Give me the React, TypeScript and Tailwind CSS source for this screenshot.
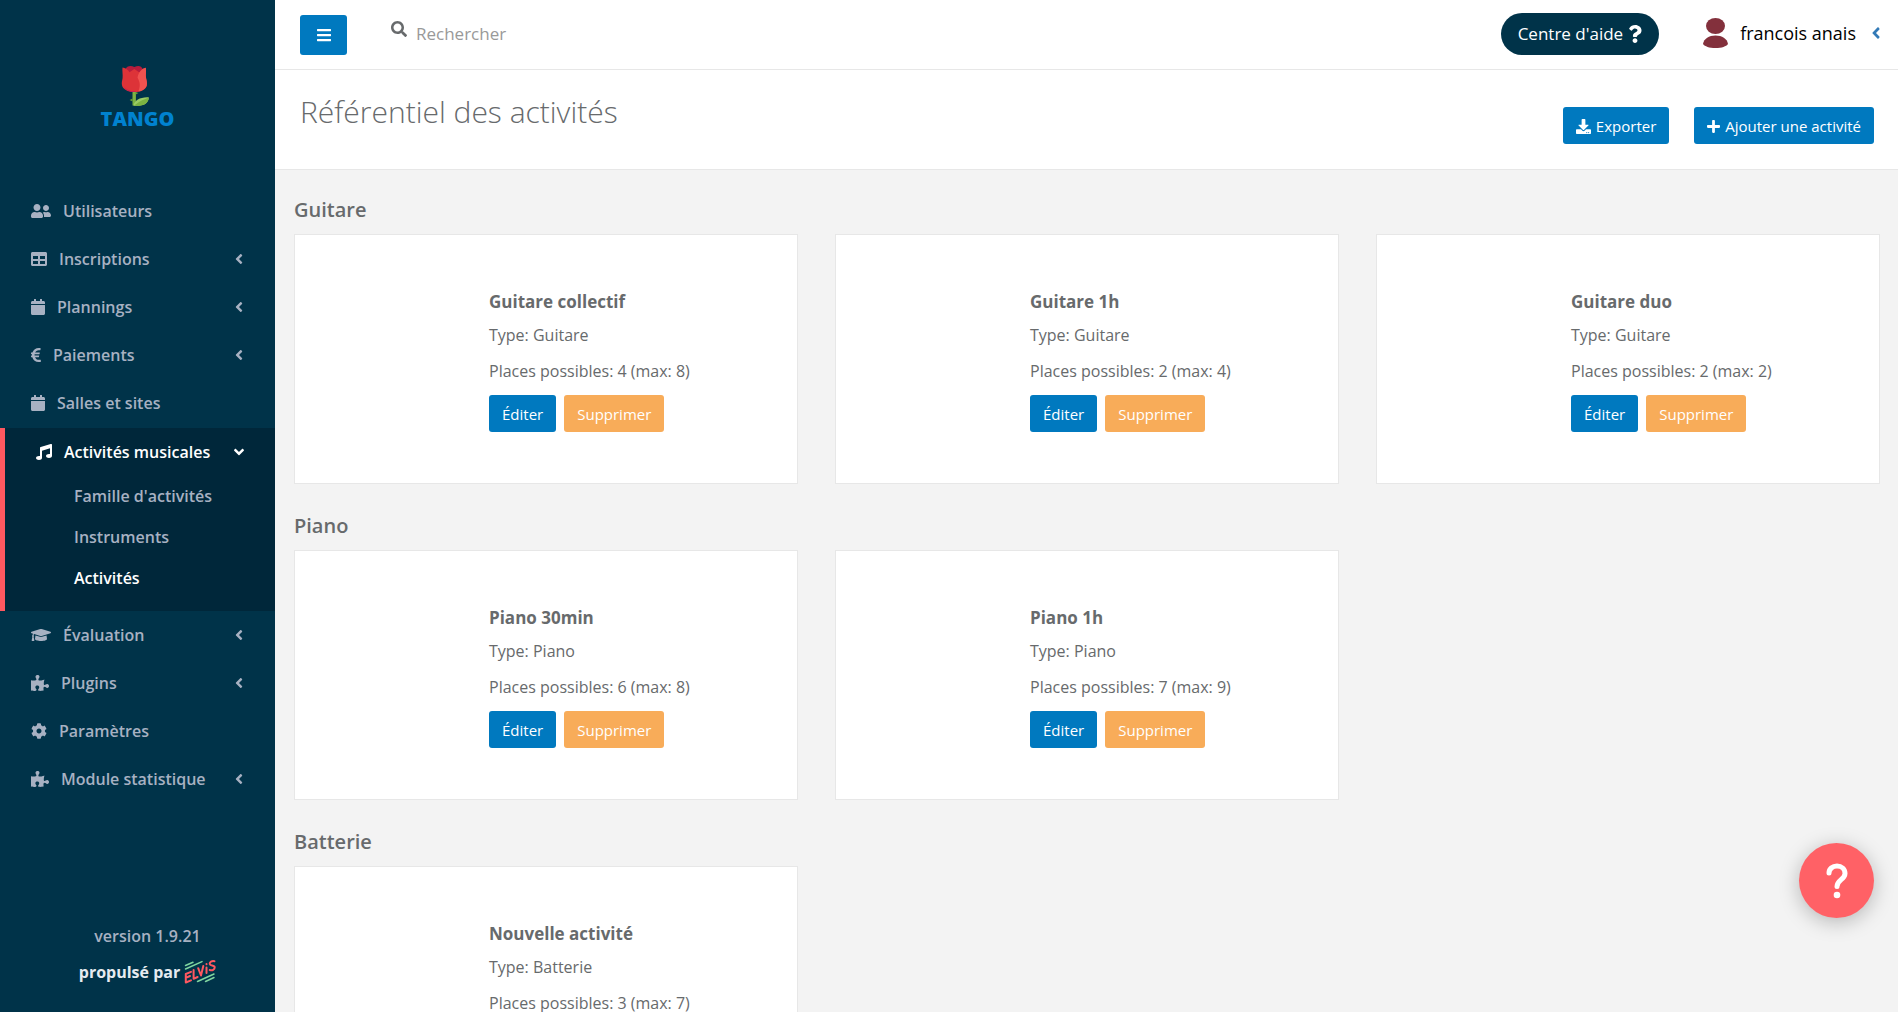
import { useState } from "react";
import type { IconType } from "react-icons";
import {
  FaAngleDown,
  FaAngleLeft,
  FaBars,
  FaCalendar,
  FaCog,
  FaDownload,
  FaEuroSign,
  FaGraduationCap,
  FaMusic,
  FaPlus,
  FaPuzzlePiece,
  FaQuestion,
  FaSearch,
  FaTable,
  FaUserFriends,
} from "react-icons/fa";

type MenuEntry = {
  label: string;
  icon: IconType;
  iconClass: string;
  expandable?: boolean;
  children?: string[];
};

type Activity = { name: string; type: string; places: number; max: number };

const menu: MenuEntry[] = [
  { label: "Utilisateurs", icon: FaUserFriends, iconClass: "mr-3 h-4 w-5" },
  { label: "Inscriptions", icon: FaTable, iconClass: "mr-3 h-4 w-4", expandable: true },
  { label: "Plannings", icon: FaCalendar, iconClass: "mr-3 h-4 w-[14px]", expandable: true },
  { label: "Paiements", icon: FaEuroSign, iconClass: "mr-3 h-4 w-[10px]", expandable: true },
  { label: "Salles et sites", icon: FaCalendar, iconClass: "mr-3 h-4 w-[14px]" },
  {
    label: "Activités musicales",
    icon: FaMusic,
    iconClass: "mr-3 h-4 w-4",
    expandable: true,
    children: ["Famille d'activités", "Instruments", "Activités"],
  },
  { label: "Évaluation", icon: FaGraduationCap, iconClass: "mr-3 h-4 w-5", expandable: true },
  { label: "Plugins", icon: FaPuzzlePiece, iconClass: "mr-3 h-4 w-[18px]", expandable: true },
  { label: "Paramètres", icon: FaCog, iconClass: "mr-3 h-4 w-4" },
  {
    label: "Module statistique",
    icon: FaPuzzlePiece,
    iconClass: "mr-3 h-4 w-[18px]",
    expandable: true,
  },
];

const families: { title: string; activities: Activity[] }[] = [
  {
    title: "Guitare",
    activities: [
      { name: "Guitare collectif", type: "Guitare", places: 4, max: 8 },
      { name: "Guitare 1h", type: "Guitare", places: 2, max: 4 },
      { name: "Guitare duo", type: "Guitare", places: 2, max: 2 },
    ],
  },
  {
    title: "Piano",
    activities: [
      { name: "Piano 30min", type: "Piano", places: 6, max: 8 },
      { name: "Piano 1h", type: "Piano", places: 7, max: 9 },
    ],
  },
  {
    title: "Batterie",
    activities: [{ name: "Nouvelle activité", type: "Batterie", places: 3, max: 7 }],
  },
];

function RoseLogo() {
  return (
    <svg viewBox="0 0 30 42" className="mr-[5px] h-[42px] w-[30px]" aria-hidden="true">
      <path d="M12.500 25h3.400v15.500h-3.400z" fill="#7cb342" />
      <path d="M12.600 33.500 9.600 35l3 1.400zM15.800 27l2.600 1-2.600 1.600z" fill="#689f38" />
      <path d="M13.500 40.700c1-5.200 7-8.900 15.300-8.300-.4 6-5.400 9.100-15.300 8.300z" fill="#9ccc65" />
      <path d="M14 40.700c4-3.400 8-5.700 14.800-8.300-.4 6-5 9.100-14.800 8.300z" fill="#7cb342" />
      <path d="M5 4.500C7 1 10.500.2 14.300 2c4-1.800 6.900-1.500 8.700 2.500l-3 9H8z" fill="#b71c3c" />
      <path
        d="M2.500 2.600c2.700.2 5.300 2 7 4.700L14.300 4l5.200 3.400c1.500-2.700 4-4.500 6.300-4.700.7 3.600-.4 6.900.3 10.500.5 2.600 1.300 4.200.7 7-.8 3.800-5.100 6.800-12.300 6.800S2.900 24 2 20.200c-.6-2.800.3-4.600.6-7.200.4-3.600-.6-7-.1-10.400z"
        fill="#dd3338"
      />
      <path
        d="M25.800 2.700c.7 3.600-.4 6.900.3 10.500.5 2.600 1.300 4.200.7 7-.6 2.900-3.600 5.500-8.500 6.400 2.300-5.700 1.700-9.600-.8-13.800C18.400 7 22 3.400 25.800 2.700z"
        fill="#f0524f"
      />
      <path d="M4 22c2.200 3.400 9.500 5 14.300 4.600-6.200 1.200-12.200-.4-14.300-4.600z" fill="#c2185b" />
    </svg>
  );
}

function ElvisLogo() {
  return (
    <svg
      viewBox="0 0 32 26"
      className="h-[26px] w-[32px]"
      fill="none"
      strokeLinecap="round"
      strokeLinejoin="round"
      role="img"
      aria-label="Elvis"
    >
      <g stroke="#7fd6a0" strokeWidth="1.5">
        <path d="M1.500 6.500 9 3.200M1.500 10 18 2.600M13.500 22.500 30 15M21.500 22.500 30 18.500" />
      </g>
      <g stroke="#ff5860" strokeWidth="2">
        <path d="M7 12.800 1.800 15v8.500L7 21.400M1.800 18.800 6 17" />
        <path d="M9.600 11v8.800l4-1.800" />
        <path d="M14.200 9.200 17 16.500 19.300 7" />
        <path d="M22.500 8.500v5.500M22.500 5v.2" />
        <path d="M30.500 2.200C27.800 1.600 25.500 3 25.700 5c.2 2.200 4.900.8 5 3.300.1 2.200-2.500 3.500-5 2.700" />
      </g>
    </svg>
  );
}

function Sidebar() {
  const [open, setOpen] = useState<string | null>("Activités musicales");

  return (
    <nav
      aria-label="Menu principal"
      className="sticky top-0 flex h-screen w-[275px] shrink-0 flex-col bg-[#003349] text-base font-semibold text-[#a7b1c2]"
    >
      <a href="#" className="flex h-[187px] flex-col items-center pt-[65px]">
        <RoseLogo />
        <span className="text-xl leading-6 font-extrabold text-[#0082d0]">TANGO</span>
      </a>
      <ul>
        {menu.map(({ label, icon: Icon, iconClass, expandable, children }) => {
          const active = children !== undefined && open === label;
          const Chevron = active ? FaAngleDown : FaAngleLeft;
          return (
            <li
              key={label}
              className={active ? "mt-px border-l-[5px] border-[#ff5860] bg-[#00273a]" : undefined}
            >
              <button
                type="button"
                onClick={() => setOpen(open === label ? null : label)}
                className={
                  active
                    ? "flex h-12 w-full items-center pr-7 pl-[31px] text-white"
                    : "flex h-12 w-full items-center pr-7 pl-[31px]"
                }
              >
                <Icon className={iconClass} />
                {label}
                {expandable ? <Chevron className="ml-auto size-4" /> : null}
              </button>
              {active ? (
                <ul className="pb-3">
                  {children.map((child) => (
                    <li key={child}>
                      <a
                        href="#"
                        className={
                          child === "Activités"
                            ? "flex h-[41px] items-center pb-0.5 pl-[69px] text-white"
                            : "flex h-[41px] items-center pb-0.5 pl-[69px]"
                        }
                      >
                        {child}
                      </a>
                    </li>
                  ))}
                </ul>
              ) : null}
            </li>
          );
        })}
      </ul>
      <div className="mt-auto pb-[27px] text-center">
        <p className="mb-[11px] pl-5">version 1.9.21</p>
        <p className="flex items-center justify-center gap-1 pl-5 font-bold text-[#e6ebf0]">
          propulsé par <ElvisLogo />
        </p>
      </div>
    </nav>
  );
}

function TopBar() {
  return (
    <header className="flex h-[70px] items-center border-b border-[#e7e7e7] bg-white pr-[13px] pl-[25px]">
      <button
        type="button"
        aria-label="Afficher le menu"
        className="flex h-10 w-[47px] items-center justify-center rounded-[3px] bg-[#0079bf] text-white"
      >
        <FaBars className="h-4 w-[14px]" />
      </button>
      <label htmlFor="search" aria-label="Rechercher" className="mb-3 ml-11">
        <FaSearch className="size-4 text-[#676a6c]" />
      </label>
      <input
        id="search"
        type="text"
        placeholder="Rechercher"
        className="mb-0.5 ml-[9px] h-8 min-w-0 flex-1 text-[17px] outline-none placeholder:text-[#999999]"
      />
      <a
        href="#"
        className="mb-0.5 flex h-[42px] items-center gap-[5px] rounded-full bg-[#003349] px-[17px] text-[17px] text-white"
      >
        Centre d'aide <FaQuestion className="h-[18px] w-[14px]" />
      </a>
      <button type="button" className="mb-1 ml-11 flex items-center text-lg text-black">
        <svg viewBox="0 0 25 30" className="mr-3 h-[30px] w-[25px]" fill="#83303c" aria-hidden="true">
          <ellipse cx="12.5" cy="8" rx="9.5" ry="8" />
          <path d="M0 26c1-5.500 6-8.500 12.500-8.500S24 20.500 25 26c-2 2.500-6 4-12.500 4S2 28.500 0 26z" />
        </svg>
        francois anais
        <FaAngleLeft className="ml-[11px] size-[18px] text-[#337ab7]" />
      </button>
    </header>
  );
}

function PageHeading() {
  return (
    <div className="flex h-[100px] items-center justify-between border-b border-[#e7e7e7] bg-white pr-6 pl-[25px]">
      <h1 className="mb-4 text-[30px] font-light">Référentiel des activités</h1>
      <div className="mt-3 flex gap-[25px] text-[15px] text-white">
        <button
          type="button"
          className="flex h-[37px] items-center gap-[5px] rounded-[3px] bg-[#0079bf] px-[13px] pt-0.5"
        >
          <FaDownload className="size-[15px]" /> Exporter
        </button>
        <button
          type="button"
          className="flex h-[37px] items-center gap-[5px] rounded-[3px] bg-[#0079bf] px-[13px] pt-0.5"
        >
          <FaPlus className="h-[15px] w-[13px]" /> Ajouter une activité
        </button>
      </div>
    </div>
  );
}

function ActivityCard({ activity }: { activity: Activity }) {
  return (
    <article className="grid h-[250px] grid-cols-3 items-center border border-[#e7e7e7] bg-white px-5">
      <div className="col-span-2 col-start-2 pt-[3px] pl-5 text-base">
        <h3 className="mb-[9px] text-[17px] leading-6 font-bold">{activity.name}</h3>
        <p className="mb-3 leading-6">Type: {activity.type}</p>
        <p className="mb-3 leading-6">
          Places possibles: {activity.places} (max: {activity.max})
        </p>
        <div className="flex gap-2 text-[15px] text-white">
          <button type="button" className="h-[37px] rounded-[3px] bg-[#0079bf] px-[13px] pt-0.5">
            Éditer
          </button>
          <button type="button" className="h-[37px] rounded-[3px] bg-[#f8ac59] px-[13px] pt-0.5">
            Supprimer
          </button>
        </div>
      </div>
    </article>
  );
}

export default function App() {
  return (
    <div className="flex min-h-screen bg-[#f3f3f3] font-['Open_Sans','Noto_Sans',sans-serif] text-[#676a6c]">
      <Sidebar />
      <div className="min-w-0 flex-1">
        <TopBar />
        <PageHeading />
        <main className="pr-[18px] pl-[19px]">
          {families.map((family) => (
            <section key={family.title} className="pt-7 first:pt-[26px]">
              <h2 className="mb-[10px] text-xl font-semibold">{family.title}</h2>
              <div className="grid grid-cols-3 gap-[37px]">
                {family.activities.map((activity) => (
                  <ActivityCard key={activity.name} activity={activity} />
                ))}
              </div>
            </section>
          ))}
        </main>
      </div>
      <button
        type="button"
        aria-label="Aide"
        className="fixed right-6 bottom-[94px] flex size-[75px] items-center justify-center rounded-full bg-[#ff6166] shadow-[0_4px_20px_rgba(0,0,0,0.25)]"
      >
        <svg viewBox="0 0 22 36" className="h-9 w-[22px]" fill="none" aria-hidden="true">
          <path
            d="M3 10c0-4 3.500-7 8-7s8 3 8 7.500c0 6-8 6.500-8 13"
            stroke="white"
            strokeWidth="5"
            strokeLinecap="round"
            strokeLinejoin="round"
          />
          <circle cx="11" cy="32" r="3.3" fill="white" />
        </svg>
      </button>
    </div>
  );
}
